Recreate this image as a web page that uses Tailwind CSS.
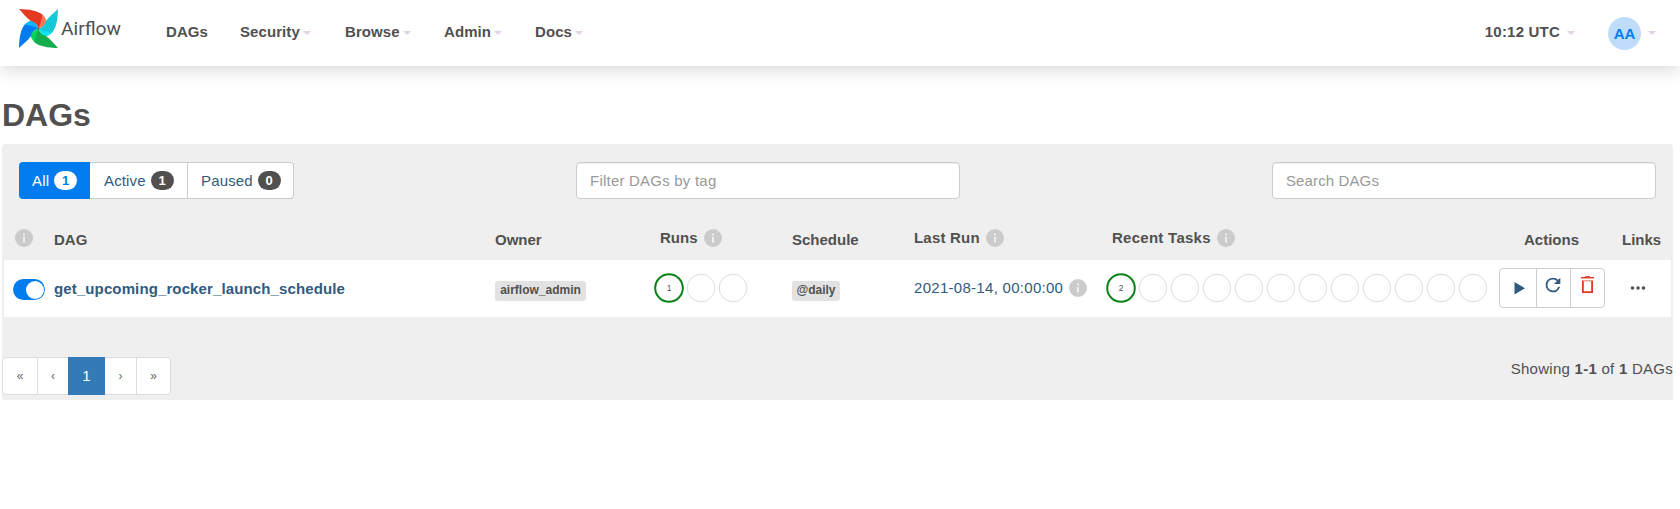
<!DOCTYPE html>
<html lang="en">
<head>
<meta charset="utf-8">
<title>Airflow - DAGs</title>
<script src="https://cdn.jsdelivr.net/npm/@tailwindcss/browser@4"></script>
</head>
<body class="h-[509px] overflow-hidden bg-white font-['Liberation_Sans',Arial,sans-serif] text-[15px] leading-[21px] text-[#51504f]">
<svg class="hidden">
  <symbol id="info" viewBox="0 0 18 18"><circle cx="9" cy="9" r="9" fill="#cbcbcb"/><path d="M8 4.500h2v2H8zM8 8h2v5.500H8z" fill="#efefef"/></symbol>
  <symbol id="caret" viewBox="0 0 8 4"><path d="M0 0h8L4 4z" fill="#e2d2e6"/></symbol>
  <symbol id="ring" viewBox="0 0 30 30"><circle cx="15" cy="15" r="13.8" fill="none" stroke="#ddd" stroke-width="1"/></symbol>
  <symbol id="ringok" viewBox="0 0 30 30"><circle cx="15" cy="15" r="13.8" fill="none" stroke="#0a8217" stroke-width="2"/></symbol>
  <path id="fold" d="M20.500 7.200 23.500 5.800C25.500 7.600 27 10 27.500 12.500 26 15.500 23.800 18.600 19.500 19.500z"/>
  <path id="blade" d="M0 0C10 .3 19 1.600 23.500 5.800 22.300 10.500 21.800 15 19.500 19.500 18.600 15.200 15.500 13 12 12 7.500 9 4 4 0 0z"/>
</svg>

<header class="flex h-[66px] bg-white shadow-[0_2px_18px_rgba(0,0,0,0.18)]">
  <div class="flex w-[166px] pt-[9px] pl-[19px]">
    <svg class="h-[39px] w-[39px]" viewBox="0 0 39 39">
      <use href="#fold" fill="#ff7557"/>
      <use href="#fold" fill="#11e1ee" transform="rotate(90 19.500 19.500)"/>
      <use href="#fold" fill="#04d659" transform="rotate(180 19.500 19.500)"/>
      <use href="#fold" fill="#0cb6ff" transform="rotate(270 19.500 19.500)"/>
      <use href="#blade" fill="#e43921"/>
      <use href="#blade" fill="#14c8d6" transform="rotate(90 19.500 19.500)"/>
      <use href="#blade" fill="#12ad4c" transform="rotate(180 19.500 19.500)"/>
      <use href="#blade" fill="#017cee" transform="rotate(270 19.500 19.500)"/>
      <circle cx="19.500" cy="19.500" r=".8" fill="#51504f"/>
    </svg>
    <svg class="ml-[3px] h-[39px] w-[64px]"><text x="0" y="26.300" font-family="Roboto, sans-serif" font-size="18.500" fill="#51504f" textLength="60" lengthAdjust="spacingAndGlyphs">Airflow</text></svg>
  </div>
  <nav class="grid grid-cols-[74px_105px_99px_91px_70px] pt-[21px] font-bold tracking-[0.08px]">
    <a>DAGs</a>
    <a class="flex gap-[3px]">Security<svg class="mt-[10px] h-[4px] w-[8px]"><use href="#caret"/></svg></a>
    <a class="flex gap-[3px]">Browse<svg class="mt-[10px] h-[4px] w-[8px]"><use href="#caret"/></svg></a>
    <a class="flex gap-[3px]">Admin<svg class="mt-[10px] h-[4px] w-[8px]"><use href="#caret"/></svg></a>
    <a class="flex gap-[3px]">Docs<svg class="mt-[10px] h-[4px] w-[8px]"><use href="#caret"/></svg></a>
  </nav>
  <div class="ml-auto flex pr-[24px] font-bold">
    <span class="pt-[21px] tracking-[0.2px]">10:12 UTC</span>
    <svg class="mt-[31px] ml-[7px] h-[4px] w-[8px]"><use href="#caret"/></svg>
    <span class="mt-[17px] ml-[33px] flex h-[33px] w-[33px] items-center justify-center rounded-full bg-[#bfddfb] text-[#017cee]">AA</span>
    <svg class="mt-[31px] ml-[7px] h-[4px] w-[8px]"><use href="#caret"/></svg>
  </div>
</header>

<main class="pt-[31px] pr-[7px] pl-[2px]">
  <h1 class="h-[47px] text-[32px] leading-[36px] font-bold">DAGs</h1>
  <section class="h-[256px] rounded-t-[4px] bg-[#efefef]">
    <div class="flex h-[76px] items-start px-[17px] pt-[18px]">
      <div class="flex h-[37px] w-[275px] tracking-[0.15px] text-[#315a80]">
        <a class="flex w-[71px] items-center gap-[5px] rounded-l-[4px] bg-[#017cee] pl-[13px] text-white">All<b class="flex h-[19px] w-[23px] items-center justify-center rounded-full bg-white text-[13px] text-[#017cee]">1</b></a>
        <a class="flex w-[98px] items-center gap-[5px] border border-l-0 border-[#ccc] bg-white pl-[14px]">Active<b class="flex h-[19px] w-[23px] items-center justify-center rounded-full bg-[#51504f] text-[13px] text-white">1</b></a>
        <a class="flex w-[106px] items-center gap-[5px] rounded-r-[4px] border border-l-0 border-[#ccc] bg-white pl-[13px]">Paused<b class="flex h-[19px] w-[23px] items-center justify-center rounded-full bg-[#51504f] text-[13px] text-white">0</b></a>
      </div>
      <div class="ml-[282px] flex h-[37px] w-[384px] items-center rounded-[4px] border border-[#ccc] bg-white pl-[13px] tracking-[0.22px] text-[#999] shadow-[inset_0_1px_1px_rgba(0,0,0,0.075)]">Filter DAGs by tag</div>
      <div class="ml-auto flex h-[37px] w-[384px] items-center rounded-[4px] border border-[#ccc] bg-white pl-[13px] tracking-[0.12px] text-[#999] shadow-[inset_0_1px_1px_rgba(0,0,0,0.075)]">Search DAGs</div>
    </div>

    <div class="mx-[2px]">
      <div class="grid h-[40px] grid-cols-[50px_441px_165px_132px_122px_198px_412px_98px_49px] pt-[9px] font-bold">
        <span class="pl-[11px]"><svg class="h-[18px] w-[18px]"><use href="#info"/></svg></span>
        <span>DAG</span>
        <span>Owner</span>
        <span class="flex gap-[6px] leading-[18px]">Runs<svg class="h-[18px] w-[18px]"><use href="#info"/></svg></span>
        <span>Schedule</span>
        <span class="flex gap-[6px] leading-[18px] tracking-[0.2px]">Last Run<svg class="h-[18px] w-[18px]"><use href="#info"/></svg></span>
        <span class="flex gap-[6px] leading-[18px] tracking-[0.27px]">Recent Tasks<svg class="h-[18px] w-[18px]"><use href="#info"/></svg></span>
        <span>Actions</span>
        <span>Links</span>
      </div>
      <div class="grid h-[57px] grid-cols-[50px_441px_158px_139px_122px_192px_393px_172px] bg-white">
        <span class="mt-[19px] ml-[9px] flex h-[21px] w-[32px] items-center justify-end rounded-full bg-[#017cee] pr-[1px]"><i class="h-[18px] w-[18px] rounded-full bg-white"></i></span>
        <b class="pt-[18px] tracking-[0.12px] text-[#315a80]">get_upcoming_rocker_launch_schedule</b>
        <span class="pt-[21px]"><b class="flex h-[20px] w-[91px] justify-center rounded-[3px] bg-[#e2e2e2] text-[12px] leading-[18px]">airflow_admin</b></span>
        <svg class="mt-[13px] h-[30px] w-[96px]"><use href="#ringok" width="30" height="30" x="1"/><text x="16" y="18" font-size="8.500" text-anchor="middle" fill="#51504f">1</text><use href="#ring" width="30" height="30" x="33"/><use href="#ring" width="30" height="30" x="65"/></svg>
        <span class="pt-[21px]"><b class="flex h-[20px] w-[48px] justify-center rounded-[3px] bg-[#e2e2e2] text-[12px] leading-[18px]">@daily</b></span>
        <span class="flex gap-[6px] pt-[19px] leading-[18px] tracking-[0.29px] whitespace-nowrap text-[#315a80]">2021-08-14, 00:00:00<svg class="h-[18px] w-[18px] shrink-0"><use href="#info"/></svg></span>
        <svg class="mt-[13px] h-[30px] w-[386px]"><use href="#ringok" width="30" height="30" x="0"/><text x="15" y="18" font-size="8.500" text-anchor="middle" fill="#51504f">2</text><use href="#ring" width="30" height="30" x="32"/><use href="#ring" width="30" height="30" x="64"/><use href="#ring" width="30" height="30" x="96"/><use href="#ring" width="30" height="30" x="128"/><use href="#ring" width="30" height="30" x="160"/><use href="#ring" width="30" height="30" x="192"/><use href="#ring" width="30" height="30" x="224"/><use href="#ring" width="30" height="30" x="256"/><use href="#ring" width="30" height="30" x="288"/><use href="#ring" width="30" height="30" x="320"/><use href="#ring" width="30" height="30" x="352"/></svg>
        <div class="flex items-start pt-[8px]">
          <div class="flex h-[40px] w-[106px] rounded-[4px] border border-[#ccc] text-[#315a80]">
            <span class="w-[37px] border-r border-[#ccc] pt-[13px] pl-[14px]"><svg class="h-[13px] w-[11px]" viewBox="0 0 11 13"><path d="M.5 0 11 6.300.5 12.600z" fill="currentColor"/></svg></span>
            <span class="w-[34px] border-r border-[#ccc] pt-[5px] pl-[5px]"><svg class="h-[22px] w-[22px]" viewBox="0 0 24 24"><path d="M17.650 6.350A7.960 7.960 0 0 0 12 4a8 8 0 1 0 7.730 10h-2.080A6 6 0 1 1 12 6c1.660 0 3.140.690 4.220 1.780L13 11h7V4l-2.350 2.350z" fill="currentColor"/></svg></span>
            <span class="pt-[7px] pl-[10px]"><svg class="h-[18px] w-[13px]" viewBox="0 0 13 18"><path d="M4 .2h5v1H4z" fill="#e43921"/><path d="M0 1h13v1.300H0z" fill="#e43921"/><path d="M0 2.300h13v.7H0zM1 4h11v1.500H1z" fill="#f1a095"/><path d="M1.900 5v11.200h9.200V5" fill="none" stroke="#e43921" stroke-width="1.800"/></svg></span>
          </div>
          <svg class="mt-[17px] ml-[25px] h-[6px] w-[16px]" viewBox="0 0 16 6"><g fill="#51504f"><circle cx="2.500" cy="3" r="1.800"/><circle cx="8" cy="3" r="1.800"/><circle cx="13.500" cy="3" r="1.800"/></g></svg>
        </div>
      </div>
    </div>

    <div class="flex justify-between pt-[40px]">
      <div class="flex h-[38px] w-[169px] text-center text-[12px] leading-[36px] text-[#666]">
        <span class="w-[36px] rounded-l-[4px] border border-[#ddd] bg-white">«</span>
        <span class="w-[30px] border-y border-[#ddd] bg-white">‹</span>
        <span class="w-[37px] bg-[#337ab7] text-[15px] leading-[38px] text-white">1</span>
        <span class="w-[32px] border border-l-0 border-[#ddd] bg-white">›</span>
        <span class="w-[34px] rounded-r-[4px] border border-l-0 border-[#ddd] bg-white">»</span>
      </div>
      <div class="pt-[1px] tracking-[0.26px]">Showing <b>1-1</b> of <b>1</b> DAGs</div>
    </div>
  </section>
</main>
</body>
</html>
